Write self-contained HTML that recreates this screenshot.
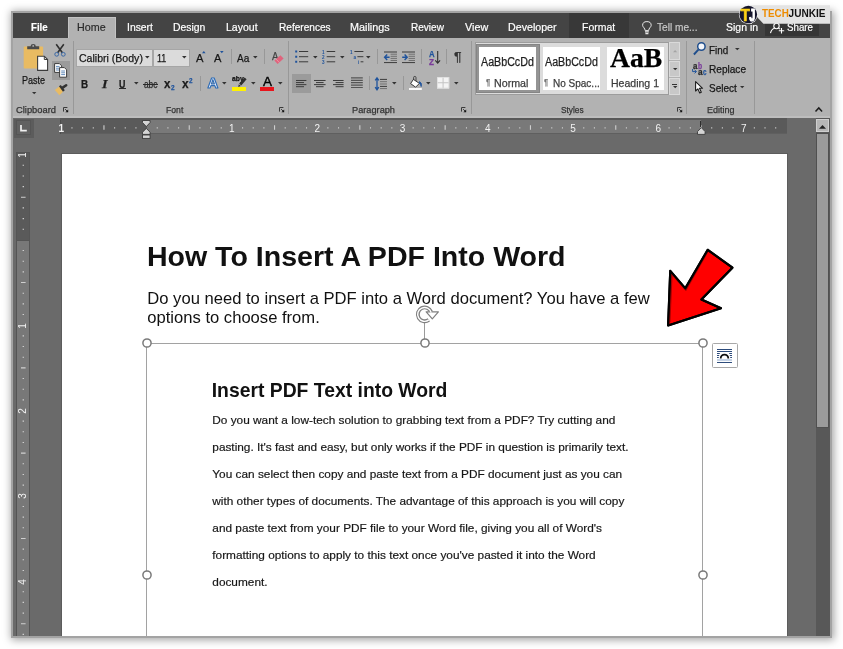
<!DOCTYPE html>
<html><head><meta charset="utf-8"><title>How To Insert A PDF Into Word</title>
<style>
*{margin:0;padding:0;box-sizing:border-box}
html,body{width:843px;height:649px;overflow:hidden;background:#fff}
body{position:relative;font-family:"Liberation Sans",sans-serif;font-size:11px;color:#262626}
.a{position:absolute}
svg{overflow:visible}
.t{position:absolute;white-space:nowrap;line-height:14px;transform-origin:0 50%}
#win{position:absolute;left:11px;top:11px;width:821px;height:627px;border:2px solid #a3a3a3;background:#6a6a6a;box-shadow:0.5px 0.5px 8px 1px rgba(0,0,0,.36);overflow:hidden;will-change:transform}
#in{position:absolute;left:-13px;top:-13px;width:843px;height:649px}
</style></head><body>
<div id="win"><div id="in">
<div class="a" style="left:13px;top:13px;width:817px;height:25px;background:#444;"></div>
<div class="a" style="left:68px;top:17px;width:48px;height:22px;background:#b2b2b2;border:1px solid #c4c4c4;border-bottom:none;"></div>
<div class="a" style="left:569px;top:13px;width:60px;height:25px;background:#383838;"></div>
<div class="a" style="left:765px;top:16px;width:54px;height:20px;background:#363636;"></div>
<span class="t" style="left:30.70px;top:20.39px;font-size:11px;color:#fff;font-weight:bold;-webkit-text-stroke:0.2px;transform:scaleX(0.8811)">File</span>
<span class="t" style="left:77.30px;top:20.22px;font-size:11.5px;color:#2b2b2b;-webkit-text-stroke:0.2px;transform:scaleX(0.9320)">Home</span>
<span class="t" style="left:126.60px;top:20.22px;font-size:11.5px;color:#fff;-webkit-text-stroke:0.2px;transform:scaleX(0.9004)">Insert</span>
<span class="t" style="left:173.20px;top:20.22px;font-size:11.5px;color:#fff;-webkit-text-stroke:0.2px;transform:scaleX(0.9047)">Design</span>
<span class="t" style="left:226.20px;top:20.22px;font-size:11.5px;color:#fff;-webkit-text-stroke:0.2px;transform:scaleX(0.9151)">Layout</span>
<span class="t" style="left:278.50px;top:20.22px;font-size:11.5px;color:#fff;-webkit-text-stroke:0.2px;transform:scaleX(0.8774)">References</span>
<span class="t" style="left:350.30px;top:20.22px;font-size:11.5px;color:#fff;-webkit-text-stroke:0.2px;transform:scaleX(0.9387)">Mailings</span>
<span class="t" style="left:411.20px;top:20.22px;font-size:11.5px;color:#fff;-webkit-text-stroke:0.2px;transform:scaleX(0.8722)">Review</span>
<span class="t" style="left:464.80px;top:20.22px;font-size:11.5px;color:#fff;-webkit-text-stroke:0.2px;transform:scaleX(0.9386)">View</span>
<span class="t" style="left:508.40px;top:20.22px;font-size:11.5px;color:#fff;-webkit-text-stroke:0.2px;transform:scaleX(0.9271)">Developer</span>
<span class="t" style="left:582.40px;top:20.22px;font-size:11.5px;color:#fff;-webkit-text-stroke:0.2px;transform:scaleX(0.9088)">Format</span>
<span class="t" style="left:656.50px;top:20.22px;font-size:11.5px;color:#c9c9c9;-webkit-text-stroke:0.2px;transform:scaleX(0.8801)">Tell me...</span>
<span class="t" style="left:725.70px;top:20.22px;font-size:11.5px;color:#fff;-webkit-text-stroke:0.2px;transform:scaleX(0.9127)">Sign in</span>
<span class="t" style="left:787.00px;top:20.22px;font-size:11.5px;color:#fff;-webkit-text-stroke:0.2px;transform:scaleX(0.8473)">Share</span>
<svg class="a" style="left:641.6px;top:20.6px;" width="10" height="13.4" viewBox="0 0 10 13.4"><path d="M3.2 9.6Q3 8 1.8 6.6Q0.6 5.2 0.6 4.4Q0.6 0.6 4.9 0.6Q9.2 0.6 9.2 4.4Q9.2 5.2 8 6.6Q6.8 8 6.6 9.6Z" fill="none" stroke="#e8e8e8" stroke-width="1"/><path d="M3 10.9H6.8M3.4 12.6H6.4" stroke="#e8e8e8" stroke-width="1.1"/></svg>
<svg class="a" style="left:769.8px;top:23.4px;" width="14.4" height="10.6" viewBox="0 0 14.4 10.6"><circle cx="6.5" cy="3" r="2.7" fill="none" stroke="#fff" stroke-width="1.1"/><path d="M0.5 10.2Q1.2 6.2 4.6 5.2" fill="none" stroke="#fff" stroke-width="1.1"/><path d="M8.4 5.2Q9.4 5.5 10 6.2" fill="none" stroke="#fff" stroke-width="1.1"/><path d="M11.5 5V10.4M8.8 7.7H14.2" stroke="#fff" stroke-width="1.1"/></svg>
<div class="a" style="left:13px;top:38px;width:817px;height:79px;background:#b2b2b2;"></div>
<div class="a" style="left:13px;top:116px;width:817px;height:2px;background:#bdbdbd;"></div>
<svg class="a" style="left:23px;top:43px;" width="26" height="29" viewBox="0 0 26 29">
<rect x="0.7" y="3.6" width="19.4" height="21.9" rx="1" fill="#e9bb62"/>
<path d="M4.2 6.2V3.2H7.6Q7.6 1 10.2 1Q12.8 1 12.8 3.2H16.2V6.2Z" fill="#4a4a4a"/>
<circle cx="10.2" cy="2.9" r="0.9" fill="#b2b2b2"/>
<path d="M14.6 13.2H21.3L24.6 16.5V27.4H14.6Z" fill="#fff" stroke="#3c3c3c" stroke-width="1.1"/>
<path d="M21.3 13.2V16.5H24.6" fill="none" stroke="#3c3c3c" stroke-width="1"/>
</svg>
<span class="t" style="left:22.00px;top:73.22px;font-size:11.5px;color:#161616;-webkit-text-stroke:0.25px;transform:scaleX(0.7851)">Paste</span>
<svg class="a" style="left:31.6px;top:92.2px;" width="4.4" height="2.3" viewBox="0 0 4.4 2.3"><path d="M0 0H4.4 L2.2 2.3Z" fill="#333"/></svg>
<svg class="a" style="left:54px;top:44px;" width="12" height="13" viewBox="0 0 12 13">
<path d="M2.2 0.3L8.4 8.8M9.8 0.3L3.6 8.8" stroke="#303030" stroke-width="1.6" fill="none"/>
<circle cx="2.7" cy="10.3" r="1.9" fill="none" stroke="#3a68a6" stroke-width="1"/>
<circle cx="9.3" cy="10.3" r="1.9" fill="none" stroke="#3a68a6" stroke-width="1"/>
</svg>
<div class="a" style="left:51.5px;top:61px;width:18.5px;height:18.7px;background:#9b9b9b;"></div>
<svg class="a" style="left:54px;top:63px;" width="14" height="15" viewBox="0 0 14 15">
<path d="M0.6 0.6H5.4L7.6 2.8V9.4H0.6Z" fill="#fff" stroke="#3c3c3c" stroke-width="1"/>
<path d="M2 3.4H5.6M2 5.2H5.6M2 7H5.6" stroke="#3c6ea8" stroke-width="0.8"/>
<path d="M5.6 4.6H10.4L12.6 6.8V14.2H5.6Z" fill="#fff" stroke="#3c3c3c" stroke-width="1"/>
<path d="M7.2 8H11M7.2 9.8H11M7.2 11.6H11" stroke="#3c6ea8" stroke-width="0.8"/>
</svg>
<svg class="a" style="left:54px;top:84px;" width="14" height="12" viewBox="0 0 14 12">
<path d="M0.9 6L5.6 2.2L9 7.8L5.4 11.2Z" fill="#e9bb62"/>
<path d="M5.9 1.6L9.9 7" stroke="#333" stroke-width="2.3"/>
<path d="M8.3 3.9L12.2 1.2" stroke="#333" stroke-width="2.5" stroke-linecap="round"/>
</svg>
<span class="t" style="left:15.70px;top:103.38px;font-size:9.3px;color:#333;-webkit-text-stroke:0.25px;transform:scaleX(1.0051)">Clipboard</span>
<svg class="a" style="left:63.2px;top:107.3px;" width="6" height="6" viewBox="0 0 6 6"><path d="M0.5 4.6V0.5H4.4" fill="none" stroke="#3a3a3a" stroke-width="1"/><path d="M5.2 2.4V5.2H2.4Z" fill="#111"/><path d="M2.2 2.2L4 4" stroke="#222" stroke-width="0.9"/></svg>
<div class="a" style="left:73px;top:41px;width:1px;height:73px;background:#989898;"></div>
<div class="a" style="left:76.3px;top:48.5px;width:76.6px;height:18.2px;background:#dbdbdb;border:1px solid #a6a6a6;"></div>
<div class="a" style="left:153.4px;top:48.5px;width:36.6px;height:18.2px;background:#dbdbdb;border:1px solid #a6a6a6;"></div>
<span class="t" style="left:78.60px;top:50.82px;font-size:11.5px;color:#161616;-webkit-text-stroke:0.25px;transform:scaleX(0.9172)">Calibri (Body)</span>
<svg class="a" style="left:145.3px;top:55.8px;" width="4.6" height="2.4" viewBox="0 0 4.6 2.4"><path d="M0 0H4.6 L2.3 2.4Z" fill="#333"/></svg>
<span class="t" style="left:156.70px;top:50.82px;font-size:11.5px;color:#161616;-webkit-text-stroke:0.25px;transform:scaleX(0.7780)">11</span>
<svg class="a" style="left:182.3px;top:55.8px;" width="4.6" height="2.4" viewBox="0 0 4.6 2.4"><path d="M0 0H4.6 L2.3 2.4Z" fill="#333"/></svg>
<span class="t" style="left:196.00px;top:51.22px;font-size:11.5px;color:#161616;-webkit-text-stroke:0.25px;transform:scaleX(0.9776)">A</span>
<svg class="a" style="left:202px;top:50.7px;" width="3.6" height="2.3" viewBox="0 0 3.6 2.3"><path d="M0 2.3H3.6L1.8 0Z" fill="#1f539c"/></svg>
<span class="t" style="left:213.90px;top:51.67px;font-size:10.2px;color:#161616;-webkit-text-stroke:0.25px;transform:scaleX(1.0887)">A</span>
<svg class="a" style="left:219.6px;top:50.7px;" width="3.6" height="2.3" viewBox="0 0 3.6 2.3"><path d="M0 0H3.6L1.8 2.3Z" fill="#1f539c"/></svg>
<div class="a" style="left:230.5px;top:49.3px;width:1px;height:14.9px;background:#989898;"></div>
<span class="t" style="left:237.00px;top:51.22px;font-size:11.5px;color:#161616;-webkit-text-stroke:0.25px;transform:scaleX(0.8737)">Aa</span>
<svg class="a" style="left:252.6px;top:55.8px;" width="4.6" height="2.4" viewBox="0 0 4.6 2.4"><path d="M0 0H4.6 L2.3 2.4Z" fill="#333"/></svg>
<div class="a" style="left:263.7px;top:49.3px;width:1px;height:14.9px;background:#989898;"></div>
<span class="t" style="left:271.80px;top:48.76px;font-size:10.5px;color:#444;-webkit-text-stroke:0.25px;transform:scaleX(0.9122)">A</span>
<svg class="a" style="left:273.5px;top:55px;" width="10" height="9.5" viewBox="0 0 10 9.5"><path d="M0.4 5.6L6.4 0.2L9.6 3.6L3.6 9Z" fill="#e0637c"/><path d="M2.1 4.1L5.3 7.5" stroke="#ef9fb0" stroke-width="0.8"/></svg>
<span class="t" style="left:81.30px;top:77.12px;font-size:11.5px;color:#1c1c1c;font-weight:bold;-webkit-text-stroke:0.25px;transform:scaleX(0.8541)">B</span>
<span class="t" style="left:101.60px;top:76.88px;font-size:12.5px;color:#1c1c1c;font-weight:bold;font-style:italic;font-family:&quot;Liberation Serif&quot;,serif;-webkit-text-stroke:0.25px;transform:scaleX(1.1487)">I</span>
<span class="t" style="left:119.20px;top:76.99px;font-size:11px;color:#1c1c1c;font-weight:bold;-webkit-text-stroke:0.25px;transform:scaleX(0.8047)">U</span>
<div class="a" style="left:119px;top:88.2px;width:6.9px;height:1px;background:#2a2a2a;"></div>
<svg class="a" style="left:133.9px;top:81.6px;" width="4.6" height="2.4" viewBox="0 0 4.6 2.4"><path d="M0 0H4.6 L2.3 2.4Z" fill="#333"/></svg>
<span class="t" style="left:143.60px;top:77.63px;font-size:10px;color:#2a2a2a;-webkit-text-stroke:0.25px;transform:scaleX(0.8310)">abc</span>
<div class="a" style="left:142.8px;top:83.5px;width:15px;height:1px;background:#2a2a2a;"></div>
<span class="t" style="left:163.80px;top:76.90px;font-size:13px;color:#1c1c1c;font-weight:bold;-webkit-text-stroke:0.25px;transform:scaleX(0.8847)">x</span>
<span class="t" style="left:170.60px;top:81.15px;font-size:6.5px;color:#1f539c;font-weight:bold;-webkit-text-stroke:0.25px;transform:scaleX(0.9931)">2</span>
<span class="t" style="left:182.20px;top:76.90px;font-size:13px;color:#1c1c1c;font-weight:bold;-webkit-text-stroke:0.25px;transform:scaleX(0.9123)">x</span>
<span class="t" style="left:189.30px;top:73.95px;font-size:6.5px;color:#1f539c;font-weight:bold;-webkit-text-stroke:0.25px;transform:scaleX(0.9655)">2</span>
<div class="a" style="left:199.5px;top:76px;width:1px;height:14.5px;background:#989898;"></div>
<svg class="a" style="left:206.5px;top:77px;" width="12" height="12.5" viewBox="0 0 12 12.5"><text x="0.6" y="11.3" font-family="Liberation Sans,sans-serif" font-size="14.5" font-weight="bold" fill="#eef3fa" stroke="#2f6cb5" stroke-width="1.1" stroke-linejoin="round" textLength="10.8" lengthAdjust="spacingAndGlyphs">A</text></svg>
<svg class="a" style="left:222px;top:81.6px;" width="4.6" height="2.4" viewBox="0 0 4.6 2.4"><path d="M0 0H4.6 L2.3 2.4Z" fill="#333"/></svg>
<span class="t" style="left:232.30px;top:72.23px;font-size:8px;color:#111;font-weight:bold;-webkit-text-stroke:0.25px;transform:scaleX(0.8480)">aby</span>
<svg class="a" style="left:237px;top:76.5px;" width="10" height="10.5" viewBox="0 0 10 10.5"><path d="M7.6 0.4L9.6 2.2L4.2 8.4L2.2 6.6Z" fill="#2f2f2f"/><path d="M1.8 7.2L3.8 9L1.2 10Z" fill="#2f2f2f"/></svg>
<div class="a" style="left:232px;top:87.3px;width:14.2px;height:3.5px;background:#fff200;"></div>
<svg class="a" style="left:250.5px;top:81.6px;" width="4.6" height="2.4" viewBox="0 0 4.6 2.4"><path d="M0 0H4.6 L2.3 2.4Z" fill="#333"/></svg>
<span class="t" style="left:262.60px;top:74.80px;font-size:12.4px;color:#000;-webkit-text-stroke:0.35px #000;transform:scaleX(1.0888)">A</span>
<div class="a" style="left:260px;top:87.3px;width:14.3px;height:3.5px;background:#e8141c;"></div>
<svg class="a" style="left:278.2px;top:81.6px;" width="4.6" height="2.4" viewBox="0 0 4.6 2.4"><path d="M0 0H4.6 L2.3 2.4Z" fill="#333"/></svg>
<span class="t" style="left:165.70px;top:103.38px;font-size:9.3px;color:#333;-webkit-text-stroke:0.25px;transform:scaleX(0.9296)">Font</span>
<svg class="a" style="left:279px;top:107.3px;" width="6" height="6" viewBox="0 0 6 6"><path d="M0.5 4.6V0.5H4.4" fill="none" stroke="#3a3a3a" stroke-width="1"/><path d="M5.2 2.4V5.2H2.4Z" fill="#111"/><path d="M2.2 2.2L4 4" stroke="#222" stroke-width="0.9"/></svg>
<div class="a" style="left:288.2px;top:41px;width:1px;height:73px;background:#989898;"></div>
<svg class="a" style="left:294.5px;top:50px;" width="14" height="13" viewBox="0 0 14 13">
<path d="M4 1.5H13.2M4 6.7H13.2M4 11.8H13.2" stroke="#3a3a3a" stroke-width="1"/>
<path d="M0.2 0.5H2.2V2.5H0.2ZM0.2 5.7H2.2V7.7H0.2ZM0.2 10.8H2.2V12.8H0.2Z" fill="#1f539c"/>
</svg>
<svg class="a" style="left:312.5px;top:55.8px;" width="4.6" height="2.4" viewBox="0 0 4.6 2.4"><path d="M0 0H4.6 L2.3 2.4Z" fill="#333"/></svg>
<svg class="a" style="left:322px;top:50px;" width="14" height="13" viewBox="0 0 14 13">
<path d="M4.7 1.5H13.2M4.7 6.7H13.2M4.7 11.8H13.2" stroke="#3a3a3a" stroke-width="1"/>
<text x="0" y="3.6" font-size="4.6" font-weight="bold" fill="#1f539c" font-family="Liberation Sans,sans-serif">1</text>
<text x="0" y="8.8" font-size="4.6" font-weight="bold" fill="#1f539c" font-family="Liberation Sans,sans-serif">2</text>
<text x="0" y="14" font-size="4.6" font-weight="bold" fill="#1f539c" font-family="Liberation Sans,sans-serif">3</text>
</svg>
<svg class="a" style="left:340.2px;top:55.8px;" width="4.6" height="2.4" viewBox="0 0 4.6 2.4"><path d="M0 0H4.6 L2.3 2.4Z" fill="#333"/></svg>
<svg class="a" style="left:349.5px;top:50px;" width="14" height="13" viewBox="0 0 14 13">
<path d="M4.4 1.5H13.4M7.4 6.7H13.4M10.6 11.8H13.4" stroke="#3a3a3a" stroke-width="1"/>
<text x="0" y="4" font-size="4.6" font-weight="bold" fill="#1f539c" font-family="Liberation Sans,sans-serif">1</text>
<text x="3.4" y="9" font-size="4.6" font-weight="bold" fill="#1f539c" font-family="Liberation Sans,sans-serif">a</text>
<text x="7.8" y="14" font-size="4.6" font-weight="bold" fill="#1f539c" font-family="Liberation Sans,sans-serif">i</text>
</svg>
<svg class="a" style="left:366.4px;top:55.8px;" width="4.6" height="2.4" viewBox="0 0 4.6 2.4"><path d="M0 0H4.6 L2.3 2.4Z" fill="#333"/></svg>
<div class="a" style="left:377.3px;top:49.3px;width:1px;height:14.5px;background:#989898;"></div>
<svg class="a" style="left:383.6px;top:50.6px;" width="13.2" height="12.6" viewBox="0 0 13.2 12.6">
<path d="M0 1H13M0 11.6H13" stroke="#3a3a3a" stroke-width="1"/>
<path d="M6.6 3.2H13M6.6 5.3H13M6.6 7.4H13M6.6 9.5H13" stroke="#6e6e6e" stroke-width="1"/>
<path d="M5.6 6.3H0.8M3.2 3.6L0.6 6.3L3.2 9" stroke="#1f539c" stroke-width="1.4" fill="none"/>
</svg>
<svg class="a" style="left:402px;top:50.6px;" width="13.2" height="12.6" viewBox="0 0 13.2 12.6">
<path d="M0 1H13M0 11.6H13" stroke="#3a3a3a" stroke-width="1"/>
<path d="M6.6 3.2H13M6.6 5.3H13M6.6 7.4H13M6.6 9.5H13" stroke="#6e6e6e" stroke-width="1"/>
<path d="M0.2 6.3H5M2.6 3.6L5.2 6.3L2.6 9" stroke="#1f539c" stroke-width="1.4" fill="none"/>
</svg>
<div class="a" style="left:421.2px;top:49.3px;width:1px;height:14.5px;background:#989898;"></div>
<span class="t" style="left:428.60px;top:46.58px;font-size:9px;color:#1f539c;font-weight:bold;-webkit-text-stroke:0.25px;transform:scaleX(0.8615)">A</span>
<span class="t" style="left:429.00px;top:54.72px;font-size:8.6px;color:#7a3b9a;font-weight:bold;-webkit-text-stroke:0.25px;transform:scaleX(0.9524)">Z</span>
<svg class="a" style="left:435.2px;top:50.8px;" width="5.4" height="13" viewBox="0 0 5.4 13"><path d="M2.7 0V12M0.3 9.4L2.7 12.2L5.1 9.4" stroke="#2f2f2f" stroke-width="1.1" fill="none"/></svg>
<div class="a" style="left:445.8px;top:49.3px;width:1px;height:14.5px;background:#989898;"></div>
<span class="t" style="left:454.00px;top:50.24px;font-size:12px;color:#333;-webkit-text-stroke:0.25px;transform:scaleX(1.1777)">¶</span>
<div class="a" style="left:292.1px;top:74.2px;width:18.5px;height:18.8px;background:#9b9b9b;"></div>
<svg class="a" style="left:296.1px;top:80.1px;" width="10.4" height="8.28" viewBox="0 0 10.4 8.28"><path d="M0.00 0.50H10.40M0.00 2.57H8.00M0.00 4.64H10.40M0.00 6.71H8.00" stroke="#3a3a3a" stroke-width="1"/></svg>
<svg class="a" style="left:314.2px;top:80.1px;" width="11.6" height="8.28" viewBox="0 0 11.6 8.28"><path d="M0.00 0.50H11.60M2.00 2.57H9.60M0.00 4.64H11.60M2.00 6.71H9.60" stroke="#3a3a3a" stroke-width="1"/></svg>
<svg class="a" style="left:332.8px;top:80.1px;" width="10.6" height="8.28" viewBox="0 0 10.6 8.28"><path d="M0.00 0.50H10.60M2.60 2.57H10.60M0.00 4.64H10.60M2.60 6.71H10.60" stroke="#3a3a3a" stroke-width="1"/></svg>
<svg class="a" style="left:350.9px;top:77.4px;" width="11.8" height="11.4" viewBox="0 0 11.8 11.4"><path d="M0 0.9H11.8M0 3.3H11.8M0 5.7H11.8M0 8.1H11.8M0 10.5H11.8" stroke="#555" stroke-width="1.2"/></svg>
<div class="a" style="left:369.4px;top:75.6px;width:1px;height:14.9px;background:#989898;"></div>
<svg class="a" style="left:375.2px;top:76.6px;" width="12.2" height="13.6" viewBox="0 0 12.2 13.6">
<path d="M2 1V12.6M0.2 3.4L2 0.8L3.8 3.4M0.2 10.2L2 12.8L3.8 10.2" stroke="#1f539c" stroke-width="1.3" fill="none"/>
<path d="M5 2.4H12M5 9.4H12" stroke="#3a3a3a" stroke-width="1"/><path d="M5 4.7H12M5 7H12M5 11.6H12" stroke="#707070" stroke-width="1"/>
</svg>
<svg class="a" style="left:391.6px;top:81.6px;" width="4.6" height="2.4" viewBox="0 0 4.6 2.4"><path d="M0 0H4.6 L2.3 2.4Z" fill="#333"/></svg>
<div class="a" style="left:402.5px;top:75.6px;width:1px;height:14.9px;background:#989898;"></div>
<svg class="a" style="left:408.5px;top:76px;" width="14" height="14" viewBox="0 0 14 14">
<path d="M4.4 3.4L10.4 7.4L6.6 11.2L1.6 7.6Z" fill="#fff" stroke="#3a3a3a" stroke-width="1"/>
<path d="M4.6 4V1.6Q4.6 0.4 5.8 0.4Q7 0.4 7 1.6V5" fill="none" stroke="#3a3a3a" stroke-width="0.9"/>
<path d="M10.6 5.6Q13.4 7.2 12.2 10.6Q11.6 8 10.4 7.4Z" fill="#1f539c" stroke="#1f539c" stroke-width="0.8"/>
<rect x="0" y="12.1" width="12.8" height="1.8" fill="#fff"/>
</svg>
<svg class="a" style="left:426.2px;top:81.6px;" width="4.6" height="2.4" viewBox="0 0 4.6 2.4"><path d="M0 0H4.6 L2.3 2.4Z" fill="#333"/></svg>
<svg class="a" style="left:436.5px;top:77.3px;" width="12.2" height="11.5" viewBox="0 0 12.2 11.5">
<rect x="0" y="0" width="12.2" height="11.5" fill="#f4f4f4"/>
<path d="M6.1 0V11.5M0 5.75H12.2" stroke="#c4c4c4" stroke-width="1"/>
<rect x="0.4" y="0.4" width="11.4" height="10.7" fill="none" stroke="#dcdcdc" stroke-width="0.8"/>
</svg>
<svg class="a" style="left:454px;top:81.6px;" width="4.6" height="2.4" viewBox="0 0 4.6 2.4"><path d="M0 0H4.6 L2.3 2.4Z" fill="#333"/></svg>
<span class="t" style="left:351.60px;top:103.38px;font-size:9.3px;color:#333;-webkit-text-stroke:0.25px;transform:scaleX(0.9903)">Paragraph</span>
<svg class="a" style="left:461.1px;top:107.3px;" width="6" height="6" viewBox="0 0 6 6"><path d="M0.5 4.6V0.5H4.4" fill="none" stroke="#3a3a3a" stroke-width="1"/><path d="M5.2 2.4V5.2H2.4Z" fill="#111"/><path d="M2.2 2.2L4 4" stroke="#222" stroke-width="0.9"/></svg>
<div class="a" style="left:470.9px;top:41px;width:1px;height:73px;background:#989898;"></div>
<div class="a" style="left:475.2px;top:42px;width:193.4px;height:53.2px;background:#dcdcdc;border:1px solid #9c9c9c;"></div>
<div class="a" style="left:476.4px;top:43.6px;width:63.2px;height:49.2px;background:#949494;border:1px solid #858585;"></div>
<div class="a" style="left:479.2px;top:47px;width:57px;height:42.8px;background:#fff;"></div>
<div class="a" style="left:543.2px;top:47px;width:57.1px;height:42.6px;background:#fff;"></div>
<div class="a" style="left:607px;top:47px;width:57.4px;height:42.6px;background:#fff;"></div>
<span class="t" style="left:481.40px;top:55.24px;font-size:12px;color:#1f1f1f;-webkit-text-stroke:0.25px;transform:scaleX(0.8909)">AaBbCcDd</span>
<span class="t" style="left:545.40px;top:55.24px;font-size:12px;color:#1f1f1f;-webkit-text-stroke:0.25px;transform:scaleX(0.8909)">AaBbCcDd</span>
<span class="t" style="left:486.00px;top:75.22px;font-size:8.6px;color:#777;-webkit-text-stroke:0.25px;transform:scaleX(0.9081)">¶</span>
<span class="t" style="left:493.90px;top:75.76px;font-size:10.8px;color:#3c3c3c;-webkit-text-stroke:0.25px;transform:scaleX(0.9886)">Normal</span>
<span class="t" style="left:544.10px;top:75.22px;font-size:8.6px;color:#777;-webkit-text-stroke:0.25px;transform:scaleX(0.8865)">¶</span>
<span class="t" style="left:552.50px;top:75.76px;font-size:10.8px;color:#3c3c3c;-webkit-text-stroke:0.25px;transform:scaleX(0.9262)">No Spac...</span>
<span class="t" style="left:609.90px;top:51.19px;font-size:27px;color:#000;font-weight:bold;font-family:&quot;Liberation Serif&quot;,serif;-webkit-text-stroke:0.25px;transform:scaleX(1.0232)">AaB</span>
<span class="t" style="left:611.30px;top:75.76px;font-size:10.8px;color:#3c3c3c;-webkit-text-stroke:0.25px;transform:scaleX(0.9749)">Heading 1</span>
<div class="a" style="left:669px;top:42.4px;width:11.4px;height:18px;background:#c8c8c8;border:1px solid #dadada;"></div>
<div class="a" style="left:669px;top:61.4px;width:11.4px;height:15.6px;background:#c8c8c8;border:1px solid #dadada;"></div>
<div class="a" style="left:669px;top:78px;width:11.4px;height:17px;background:#c8c8c8;border:1px solid #dadada;"></div>
<svg class="a" style="left:672.6px;top:49.6px;" width="4.2" height="2.2" viewBox="0 0 4.2 2.2"><path d="M0 2.2H4.2L2.1 0Z" fill="#a4a4a4"/></svg>
<svg class="a" style="left:672.5px;top:68.2px;" width="4.4" height="2.3" viewBox="0 0 4.4 2.3"><path d="M0 0H4.4 L2.2 2.3Z" fill="#333"/></svg>
<div class="a" style="left:672.3px;top:83.6px;width:4.8px;height:1px;background:#333;"></div>
<svg class="a" style="left:672.5px;top:85.8px;" width="4.4" height="2.3" viewBox="0 0 4.4 2.3"><path d="M0 0H4.4 L2.2 2.3Z" fill="#333"/></svg>
<span class="t" style="left:560.70px;top:103.38px;font-size:9.3px;color:#333;-webkit-text-stroke:0.25px;transform:scaleX(0.8923)">Styles</span>
<svg class="a" style="left:676.8px;top:107.3px;" width="6" height="6" viewBox="0 0 6 6"><path d="M0.5 4.6V0.5H4.4" fill="none" stroke="#3a3a3a" stroke-width="1"/><path d="M5.2 2.4V5.2H2.4Z" fill="#111"/><path d="M2.2 2.2L4 4" stroke="#222" stroke-width="0.9"/></svg>
<div class="a" style="left:686.2px;top:41px;width:1px;height:73px;background:#989898;"></div>
<svg class="a" style="left:692.6px;top:42.4px;" width="13" height="13.4" viewBox="0 0 13 13.4"><circle cx="8.4" cy="4.5" r="3.7" fill="#f4f6fa" stroke="#1f4e8c" stroke-width="1.5"/><path d="M5.4 7.6L0.9 12.5" stroke="#1f4e8c" stroke-width="1.9"/></svg>
<span class="t" style="left:708.80px;top:42.92px;font-size:11.5px;color:#161616;-webkit-text-stroke:0.25px;transform:scaleX(0.8581)">Find</span>
<svg class="a" style="left:735px;top:48px;" width="4.6" height="2.3" viewBox="0 0 4.6 2.3"><path d="M0 0H4.6 L2.3 2.3Z" fill="#333"/></svg>
<span class="t" style="left:692.60px;top:59.02px;font-size:8.6px;color:#2a2a2a;font-weight:bold;-webkit-text-stroke:0.25px;transform:scaleX(0.9203)">a</span>
<span class="t" style="left:697.50px;top:59.02px;font-size:8.6px;color:#7a3b9a;font-weight:bold;-webkit-text-stroke:0.25px;transform:scaleX(0.7810)">b</span>
<span class="t" style="left:697.70px;top:65.42px;font-size:8.6px;color:#2a2a2a;font-weight:bold;-webkit-text-stroke:0.25px;transform:scaleX(0.9621)">a</span>
<span class="t" style="left:702.70px;top:65.42px;font-size:8.6px;color:#1f539c;font-weight:bold;-webkit-text-stroke:0.25px;transform:scaleX(0.7320)">c</span>
<svg class="a" style="left:692px;top:69.4px;" width="5" height="5.4" viewBox="0 0 5 5.4"><path d="M0.6 0V2.6H4.2M2.6 0.8L4.4 2.6L2.6 4.4" stroke="#1f539c" stroke-width="1" fill="none"/></svg>
<span class="t" style="left:708.80px;top:61.92px;font-size:11.5px;color:#161616;-webkit-text-stroke:0.25px;transform:scaleX(0.8767)">Replace</span>
<svg class="a" style="left:695px;top:81.4px;" width="8.6" height="12.8" viewBox="0 0 8.6 12.8"><path d="M0.6 0.6V10L2.9 7.9L4.7 12L6.3 11.3L4.5 7.3H7.6Z" fill="#fff" stroke="#1c1c1c" stroke-width="1.1" stroke-linejoin="round"/></svg>
<span class="t" style="left:708.80px;top:80.92px;font-size:11.5px;color:#161616;-webkit-text-stroke:0.25px;transform:scaleX(0.8696)">Select</span>
<svg class="a" style="left:739.8px;top:86px;" width="4.4" height="2.3" viewBox="0 0 4.4 2.3"><path d="M0 0H4.4 L2.2 2.3Z" fill="#333"/></svg>
<span class="t" style="left:706.60px;top:103.38px;font-size:9.3px;color:#333;-webkit-text-stroke:0.25px;transform:scaleX(0.9670)">Editing</span>
<div class="a" style="left:753.5px;top:41px;width:1px;height:73px;background:#989898;"></div>
<svg class="a" style="left:814.6px;top:107.2px;" width="7.6" height="4.8" viewBox="0 0 7.6 4.8"><path d="M0.5 4.4L3.8 0.9L7.1 4.4" stroke="#1c1c1c" stroke-width="1.5" fill="none"/></svg>
<div class="a" style="left:13.5px;top:118.5px;width:20px;height:19px;background:#5c5c5c;"></div>
<div class="a" style="left:15.5px;top:120.3px;width:15.6px;height:15px;background:#616161;border:1px solid #555;"></div>
<svg class="a" style="left:20.3px;top:125.4px;" width="7" height="7" viewBox="0 0 7 7"><path d="M1 0V5.6H6.8" stroke="#f0f0f0" stroke-width="1.7" fill="none"/></svg>
<div class="a" style="left:60px;top:118px;width:727px;height:2px;background:#585858;"></div>
<div class="a" style="left:60px;top:120px;width:727px;height:13px;background:#5a5a5a;"></div>
<div class="a" style="left:146.8px;top:120px;width:554px;height:13px;background:#797979;"></div>
<div class="a" style="left:60px;top:133px;width:727px;height:0.8px;background:#5f5f5f;"></div>
<svg class="a" style="left:0px;top:0px;" width="843" height="140" viewBox="0 0 843 140"><path d="M71.96 127.2V128.6M82.62 127.2V128.6M93.29 127.2V128.6M103.95 125.2V129.8M114.61 127.2V128.6M125.27 127.2V128.6M135.94 127.2V128.6M157.26 127.2V128.6M167.92 127.2V128.6M178.59 127.2V128.6M189.25 125.2V129.8M199.91 127.2V128.6M210.57 127.2V128.6M221.24 127.2V128.6M242.56 127.2V128.6M253.22 127.2V128.6M263.89 127.2V128.6M274.55 125.2V129.8M285.21 127.2V128.6M295.88 127.2V128.6M306.54 127.2V128.6M327.86 127.2V128.6M338.52 127.2V128.6M349.19 127.2V128.6M359.85 125.2V129.8M370.51 127.2V128.6M381.17 127.2V128.6M391.84 127.2V128.6M413.16 127.2V128.6M423.82 127.2V128.6M434.49 127.2V128.6M445.15 125.2V129.8M455.81 127.2V128.6M466.48 127.2V128.6M477.14 127.2V128.6M498.46 127.2V128.6M509.12 127.2V128.6M519.79 127.2V128.6M530.45 125.2V129.8M541.11 127.2V128.6M551.77 127.2V128.6M562.44 127.2V128.6M583.76 127.2V128.6M594.42 127.2V128.6M605.09 127.2V128.6M615.75 125.2V129.8M626.41 127.2V128.6M637.07 127.2V128.6M647.74 127.2V128.6M669.06 127.2V128.6M679.73 127.2V128.6M690.39 127.2V128.6M701.05 125.2V129.8M711.71 127.2V128.6M722.38 127.2V128.6M733.04 127.2V128.6M754.36 127.2V128.6M765.02 127.2V128.6M775.69 127.2V128.6" stroke="#cfcfcf" stroke-width="1.1"/></svg>
<div class="a" style="left:60px;top:120px;width:1px;height:14px;background:#4c4c4c;"></div>
<span class="t" style="left:58.60px;top:121.74px;font-size:10px;color:#f2f2f2;font-weight:bold;">1</span>
<span class="t" style="left:229.10px;top:121.74px;font-size:10px;color:#f2f2f2;">1</span>
<span class="t" style="left:314.40px;top:121.74px;font-size:10px;color:#f2f2f2;">2</span>
<span class="t" style="left:399.70px;top:121.74px;font-size:10px;color:#f2f2f2;">3</span>
<span class="t" style="left:485.00px;top:121.74px;font-size:10px;color:#f2f2f2;">4</span>
<span class="t" style="left:570.30px;top:121.74px;font-size:10px;color:#f2f2f2;">5</span>
<span class="t" style="left:655.60px;top:121.74px;font-size:10px;color:#f2f2f2;">6</span>
<span class="t" style="left:740.90px;top:121.74px;font-size:10px;color:#f2f2f2;">7</span>
<svg class="a" style="left:142.2px;top:119.6px;" width="8.6" height="19" viewBox="0 0 8.6 19"><path d="M0.5 0.5H8.1V2.6L4.3 6.6L0.5 2.6Z" fill="#d4d4d4" stroke="#3a3a3a" stroke-width="0.9"/><path d="M4.3 8.4L8.1 12.2V14.4H0.5V12.2Z" fill="#d4d4d4" stroke="#3a3a3a" stroke-width="0.9"/><rect x="0.5" y="15" width="7.6" height="3.4" fill="#d4d4d4" stroke="#3a3a3a" stroke-width="0.9"/></svg>
<svg class="a" style="left:697.4px;top:126.6px;" width="8.6" height="8" viewBox="0 0 8.6 8"><path d="M4.3 0.6L8.1 4.6V7.4H0.5V4.6Z" fill="#d4d4d4" stroke="#3a3a3a" stroke-width="0.9"/></svg>
<div class="a" style="left:700.2px;top:120.7px;width:1px;height:6.5px;background:#2e2e2e;"></div>
<div class="a" style="left:16.4px;top:152px;width:13.2px;height:490px;background:#555;"></div>
<div class="a" style="left:17.4px;top:153px;width:11.2px;height:87.4px;background:#5a5a5a;"></div>
<div class="a" style="left:17.4px;top:241px;width:11.2px;height:400px;background:#787878;"></div>
<svg class="a" style="left:0px;top:0px;" width="843" height="649" viewBox="0 0 843 649"><path d="M22.6 165.26H24.0M22.6 175.93H24.0M22.6 186.59H24.0M21.0 197.25H25.6M22.6 207.91H24.0M22.6 218.58H24.0M22.6 229.24H24.0M22.6 250.56H24.0M22.6 261.23H24.0M22.6 271.89H24.0M21.0 282.55H25.6M22.6 293.21H24.0M22.6 303.88H24.0M22.6 314.54H24.0M22.6 335.86H24.0M22.6 346.52H24.0M22.6 357.19H24.0M21.0 367.85H25.6M22.6 378.51H24.0M22.6 389.18H24.0M22.6 399.84H24.0M22.6 421.16H24.0M22.6 431.82H24.0M22.6 442.49H24.0M21.0 453.15H25.6M22.6 463.81H24.0M22.6 474.48H24.0M22.6 485.14H24.0M22.6 506.46H24.0M22.6 517.12H24.0M22.6 527.79H24.0M21.0 538.45H25.6M22.6 549.11H24.0M22.6 559.77H24.0M22.6 570.44H24.0M22.6 591.76H24.0M22.6 602.42H24.0M22.6 613.09H24.0M21.0 623.75H25.6M22.6 634.41H24.0" stroke="#cfcfcf" stroke-width="1.1"/></svg>
<div class="a" style="left:16px;top:152.6px;width:14px;height:490px;overflow:hidden">
<span class="t" style="left:4.3px;top:-4.4px;font-size:10px;color:#f2f2f2;transform:rotate(-90deg);transform-origin:50% 50%;width:6px;text-align:center">1</span>
<span class="t" style="left:4.3px;top:166.2px;font-size:10px;color:#f2f2f2;transform:rotate(-90deg);transform-origin:50% 50%;width:6px;text-align:center">1</span>
<span class="t" style="left:4.3px;top:251.5px;font-size:10px;color:#f2f2f2;transform:rotate(-90deg);transform-origin:50% 50%;width:6px;text-align:center">2</span>
<span class="t" style="left:4.3px;top:336.8px;font-size:10px;color:#f2f2f2;transform:rotate(-90deg);transform-origin:50% 50%;width:6px;text-align:center">3</span>
<span class="t" style="left:4.3px;top:422.1px;font-size:10px;color:#f2f2f2;transform:rotate(-90deg);transform-origin:50% 50%;width:6px;text-align:center">4</span>
</div>
<div class="a" style="left:816px;top:118px;width:14px;height:519px;background:#585858;"></div>
<div class="a" style="left:816.4px;top:119.2px;width:12.8px;height:12.8px;background:#b6b6b6;border:1px solid #cfcfcf;"></div>
<svg class="a" style="left:819.4px;top:124.6px;" width="7" height="3.8" viewBox="0 0 7 3.8"><path d="M0 3.8H7L3.5 0Z" fill="#222"/></svg>
<div class="a" style="left:816px;top:133px;width:13.4px;height:295.4px;background:#9b9b9b;border:1px solid #505050;"></div>
<div class="a" style="left:61px;top:153px;width:727px;height:492px;background:#5c5c5c;"></div>
<div class="a" style="left:62px;top:154px;width:725px;height:490px;background:#fff;"></div>
<span class="t" style="left:146.90px;top:239.41px;font-size:28.55px;color:#111;font-weight:bold;line-height:34px;">How To Insert A PDF Into Word</span>
<span class="t" style="left:147.30px;top:289.35px;font-size:16.6px;color:#111;line-height:20px;">Do you need to insert a PDF into a Word document? You have a few</span>
<span class="t" style="left:147.30px;top:308.35px;font-size:16.6px;color:#111;line-height:20px;">options to choose from.</span>
<div class="a" style="left:146px;top:342.5px;width:557.2px;height:300px;background:transparent;border:1.4px solid #a2a2a2;"></div>
<span class="t" style="left:211.70px;top:378.40px;font-size:19.35px;color:#111;font-weight:bold;line-height:24px;">Insert PDF Text into Word</span>
<span class="t" style="left:212.30px;top:412.80px;font-size:11.83px;color:#161616;-webkit-text-stroke:0.18px;">Do you want a low-tech solution to grabbing text from a PDF? Try cutting and</span>
<span class="t" style="left:212.30px;top:439.85px;font-size:11.83px;color:#161616;-webkit-text-stroke:0.18px;">pasting. It's fast and easy, but only works if the PDF in question is primarily text.</span>
<span class="t" style="left:212.30px;top:466.90px;font-size:11.83px;color:#161616;-webkit-text-stroke:0.18px;">You can select then copy and paste text from a PDF document just as you can</span>
<span class="t" style="left:212.30px;top:493.95px;font-size:11.83px;color:#161616;-webkit-text-stroke:0.18px;">with other types of documents. The advantage of this approach is you will copy</span>
<span class="t" style="left:212.30px;top:521.00px;font-size:11.83px;color:#161616;-webkit-text-stroke:0.18px;">and paste text from your PDF file to your Word file, giving you all of Word's</span>
<span class="t" style="left:212.30px;top:548.05px;font-size:11.83px;color:#161616;-webkit-text-stroke:0.18px;">formatting options to apply to this text once you've pasted it into the Word</span>
<span class="t" style="left:212.30px;top:575.10px;font-size:11.83px;color:#161616;-webkit-text-stroke:0.18px;">document.</span>
<div class="a" style="left:424.1px;top:321px;width:1.1px;height:18px;background:#9a9a9a;"></div>
<svg class="a" style="left:413.8px;top:302.8px;" width="26" height="20" viewBox="0 0 26 20">
<path d="M14.8 16.9A6.9 6.9 0 1 1 17.2 9" fill="none" stroke="#808080" stroke-width="3.9"/>
<path d="M12.2 8.8H24.4L18.3 15.8Z" fill="#fff" stroke="#808080" stroke-width="1.2" stroke-linejoin="round"/>
<path d="M14.8 16.9A6.9 6.9 0 1 1 17.2 9.6" fill="none" stroke="#fff" stroke-width="1.4"/>
</svg>
<svg class="a" style="left:141.8px;top:338.1px;" width="10" height="10" viewBox="0 0 10 10"><circle cx="5" cy="5" r="4.1" fill="#fff" stroke="#7a7a7a" stroke-width="1.5"/></svg>
<svg class="a" style="left:420px;top:338.1px;" width="10" height="10" viewBox="0 0 10 10"><circle cx="5" cy="5" r="4.1" fill="#fff" stroke="#7a7a7a" stroke-width="1.5"/></svg>
<svg class="a" style="left:697.6px;top:338.1px;" width="10" height="10" viewBox="0 0 10 10"><circle cx="5" cy="5" r="4.1" fill="#fff" stroke="#7a7a7a" stroke-width="1.5"/></svg>
<svg class="a" style="left:141.8px;top:569.5px;" width="10" height="10" viewBox="0 0 10 10"><circle cx="5" cy="5" r="4.1" fill="#fff" stroke="#7a7a7a" stroke-width="1.5"/></svg>
<svg class="a" style="left:697.6px;top:569.5px;" width="10" height="10" viewBox="0 0 10 10"><circle cx="5" cy="5" r="4.1" fill="#fff" stroke="#7a7a7a" stroke-width="1.5"/></svg>
<div class="a" style="left:712.3px;top:343.4px;width:25.4px;height:24.6px;background:#fff;border:1px solid #a8a8a8;border-radius:1.5px;"></div>
<svg class="a" style="left:717px;top:349px;" width="15.2" height="14.5" viewBox="0 0 15.2 14.5">
<path d="M0 0.5H15M0 2.5H15M0 4.5H2.8M12.2 4.5H15M0 6.5H2.2M12.8 6.5H15M0 8.5H1.8M13.2 8.5H15M0 13.5H15" stroke="#2b4a7a" stroke-width="1"/>
<rect x="0" y="10" width="15" height="2" fill="#c5d3e6"/>
<path d="M3.7 9.4A3.8 3.8 0 0 1 11.3 9.4" fill="none" stroke="#111" stroke-width="1.8"/>
</svg>
<svg class="a" style="left:655px;top:240px;" width="90" height="95" viewBox="0 0 90 95">
<g transform="translate(42,50) scale(0.976) translate(-42,-50)">
<path d="M53 8.8L78.3 27.1L46.5 59.7L66.6 68.8L12.4 86.3L14.6 30.4L30 48.3Z" fill="#ff0000" stroke="#000" stroke-width="2.2" stroke-linejoin="round"/>
<path d="M52.6 11.2L30.6 50L16.2 33.6L14 83" fill="none" stroke="#a80000" stroke-width="1.6"/>
<path d="M53 8.8L78.3 27.1L46.5 59.7L66.6 68.8L12.4 86.3L14.6 30.4L30 48.3Z" fill="none" stroke="#000" stroke-width="2.2" stroke-linejoin="round"/>
</g>
</svg>
</div></div>
<svg class="a" style="left:735px;top:0px" width="108" height="30" viewBox="735 0 108 30"><path d="M748 5.2H830V23.7H763.4L757 17Z" fill="#e3e3e3"/><circle cx="748.3" cy="14.6" r="9.4" fill="#f4f4f4"/><circle cx="748.3" cy="14.5" r="8.8" fill="#15152c"/><text x="740.7" y="20.5" font-family="Liberation Sans,sans-serif" font-weight="bold" font-size="16.4" fill="#fcd116" stroke="#fcd116" stroke-width="0.7" textLength="9" lengthAdjust="spacingAndGlyphs">T</text><text x="749.3" y="20.5" font-family="Liberation Sans,sans-serif" font-weight="bold" font-size="16.4" fill="#fff" stroke="#fff" stroke-width="1.1" textLength="6" lengthAdjust="spacingAndGlyphs">J</text><text x="762" y="16.9" font-family="Liberation Sans,sans-serif" font-weight="bold" font-size="11" fill="#ee8c00" textLength="26.8" lengthAdjust="spacingAndGlyphs">TECH</text><text x="788.6" y="16.9" font-family="Liberation Sans,sans-serif" font-weight="bold" font-size="11" fill="#111" textLength="36.9" lengthAdjust="spacingAndGlyphs">JUNKIE</text></svg>
</body></html>
